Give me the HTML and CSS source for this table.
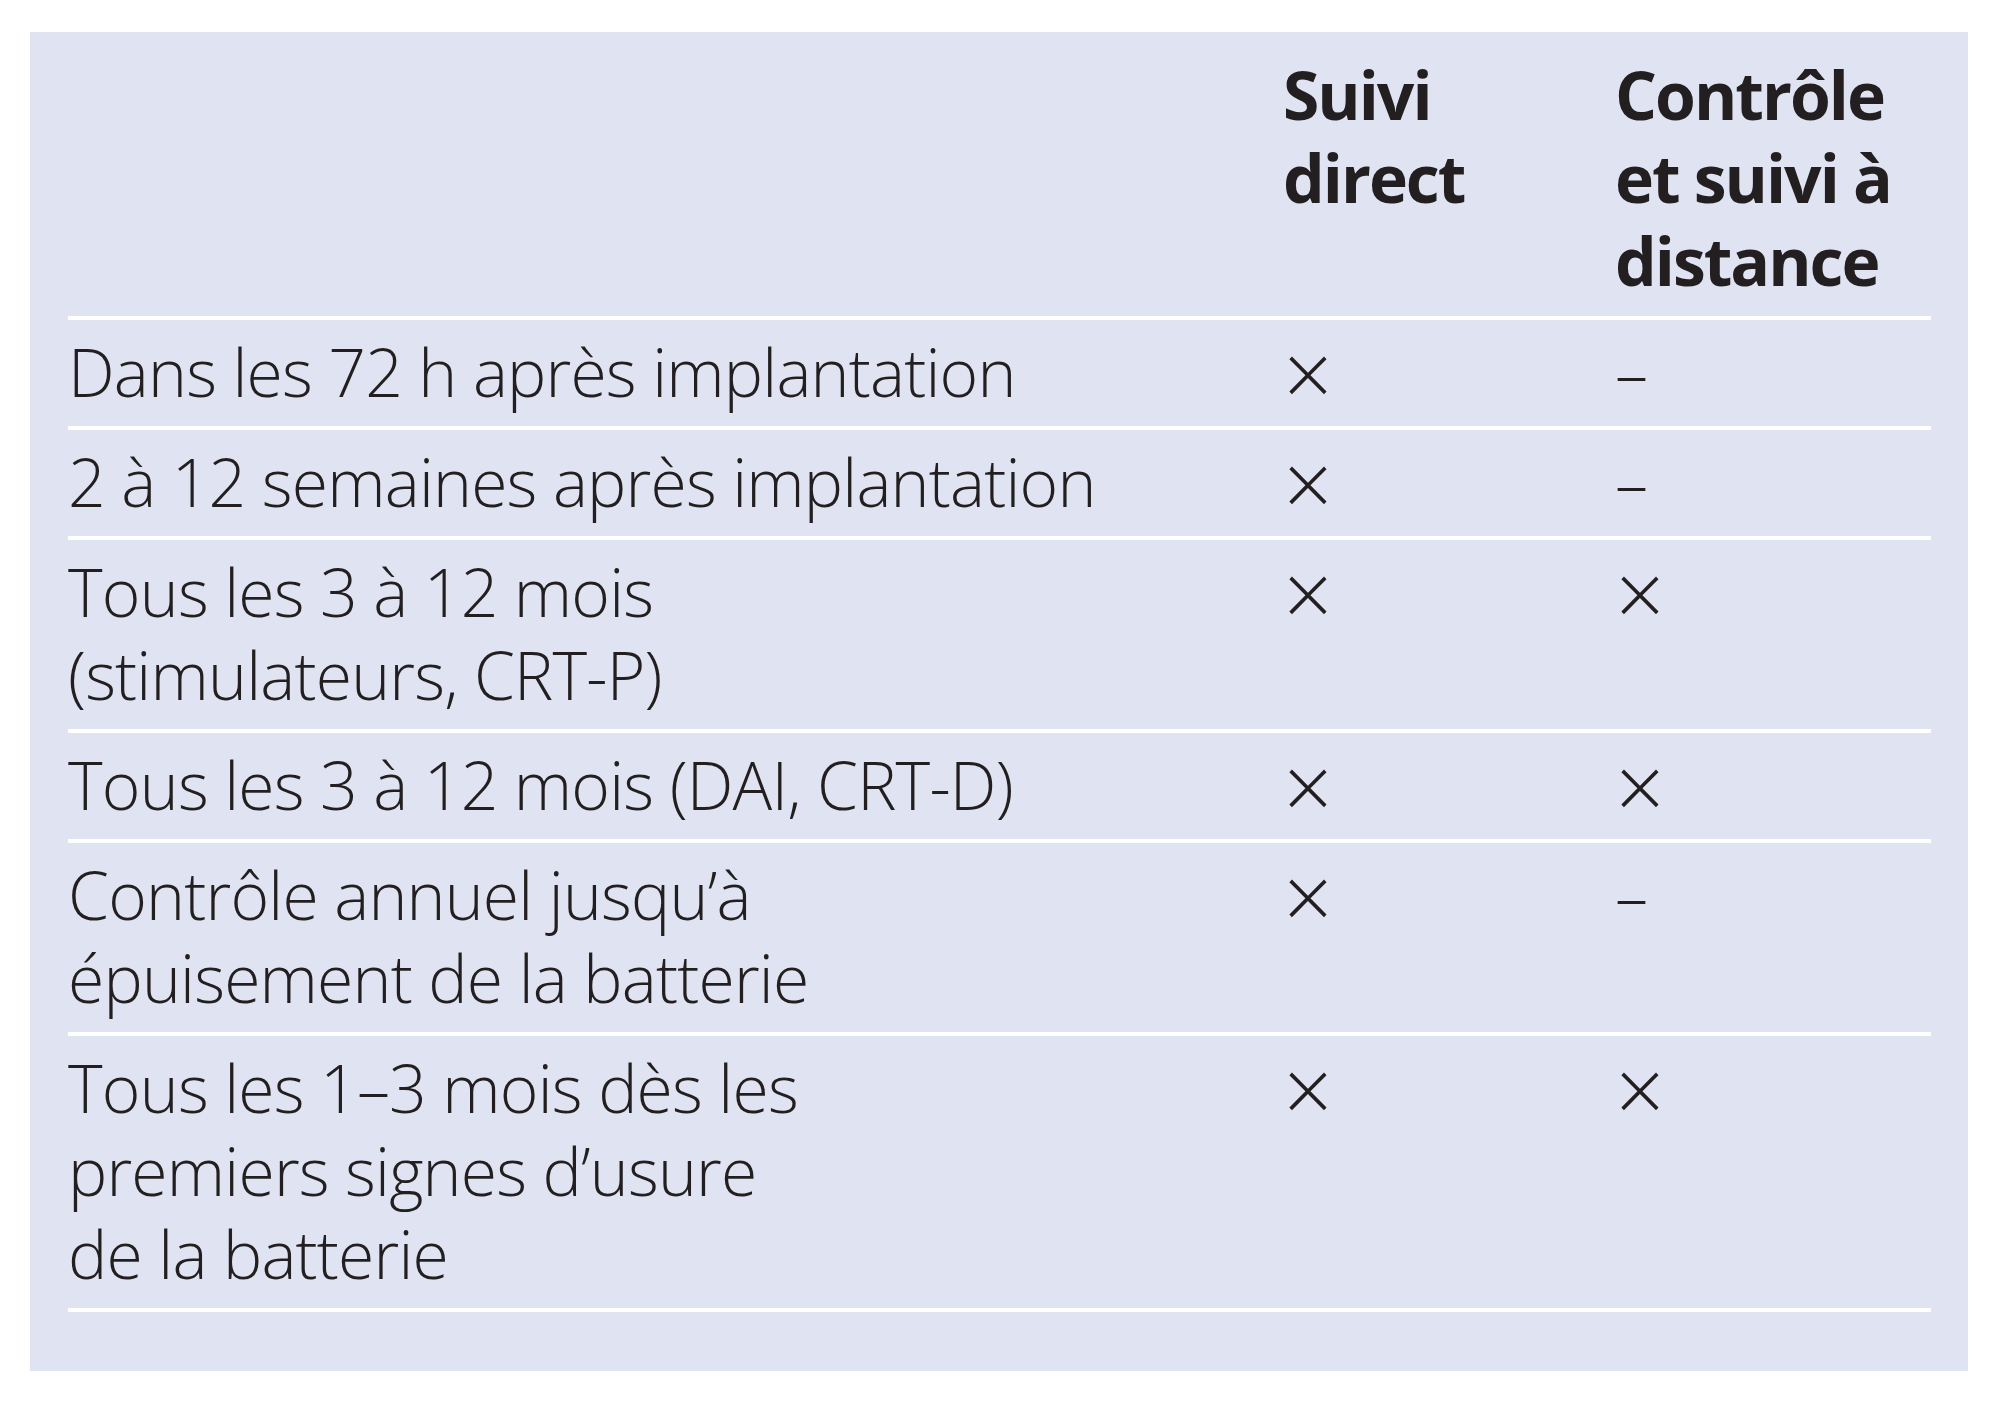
FILE: index.html
```html
<!DOCTYPE html>
<html lang="fr">
<head>
<meta charset="utf-8">
<title>Suivi des dispositifs</title>
<link rel="stylesheet" href="styles.css">
</head>
<body>
<div class="panel">
  <div class="table">
    <div class="row head">
      <div class="cell"></div>
      <div class="cell">Suivi<br>direct</div>
      <div class="cell">Contrôle<br>et suivi à<br>distance</div>
    </div>
    <div class="row">
      <div class="cell">Dans les 72 h après implantation</div>
      <div class="cell"><span class="mark">×</span></div>
      <div class="cell"><span class="dash">–</span></div>
    </div>
    <div class="row">
      <div class="cell">2 à 12 semaines après implantation</div>
      <div class="cell"><span class="mark">×</span></div>
      <div class="cell"><span class="dash">–</span></div>
    </div>
    <div class="row">
      <div class="cell">Tous les 3 à 12 mois<br>(stimulateurs, CRT-P)</div>
      <div class="cell"><span class="mark">×</span></div>
      <div class="cell"><span class="mark">×</span></div>
    </div>
    <div class="row">
      <div class="cell">Tous les 3 à 12 mois (DAI, CRT-D)</div>
      <div class="cell"><span class="mark">×</span></div>
      <div class="cell"><span class="mark">×</span></div>
    </div>
    <div class="row">
      <div class="cell">Contrôle annuel jusqu’à<br>épuisement de la batterie</div>
      <div class="cell"><span class="mark">×</span></div>
      <div class="cell"><span class="dash">–</span></div>
    </div>
    <div class="row">
      <div class="cell">Tous les 1–3 mois dès les<br>premiers signes d’usure<br>de la batterie</div>
      <div class="cell"><span class="mark">×</span></div>
      <div class="cell"><span class="mark">×</span></div>
    </div>
  </div>
</div>
</body>
</html>
```

FILE: styles.css
```css
html, body {
  margin: 0;
  padding: 0;
  background: #ffffff;
}

body {
  font-family: "Open Sans", "Liberation Sans", sans-serif;
  color: #231f20;
}

.panel {
  margin: 32px 0 0 30px;
  width: 1938px;
  height: 1339px;
  box-sizing: border-box;
  background: #e0e4f2;
  padding: 0 37px 0 38px;
}

.table {
  display: flex;
  flex-direction: column;
}

.row {
  display: grid;
  grid-template-columns: 1215px 332px 1fr;
  border-bottom: 4px solid #ffffff;
  font-size: 66px;
  font-weight: 300;
  line-height: 83px;
  letter-spacing: -0.8px;
  padding: 10px 0 13px;
}

.row.head {
  font-weight: 700;
  letter-spacing: -2px;
  padding: 21px 0 14px;
}

.mark {
  display: inline-block;
  transform: translate(6px, 4px) scale(1.3);
  transform-origin: 50% 60%;
}

.dash {
  display: inline-block;
}
```
